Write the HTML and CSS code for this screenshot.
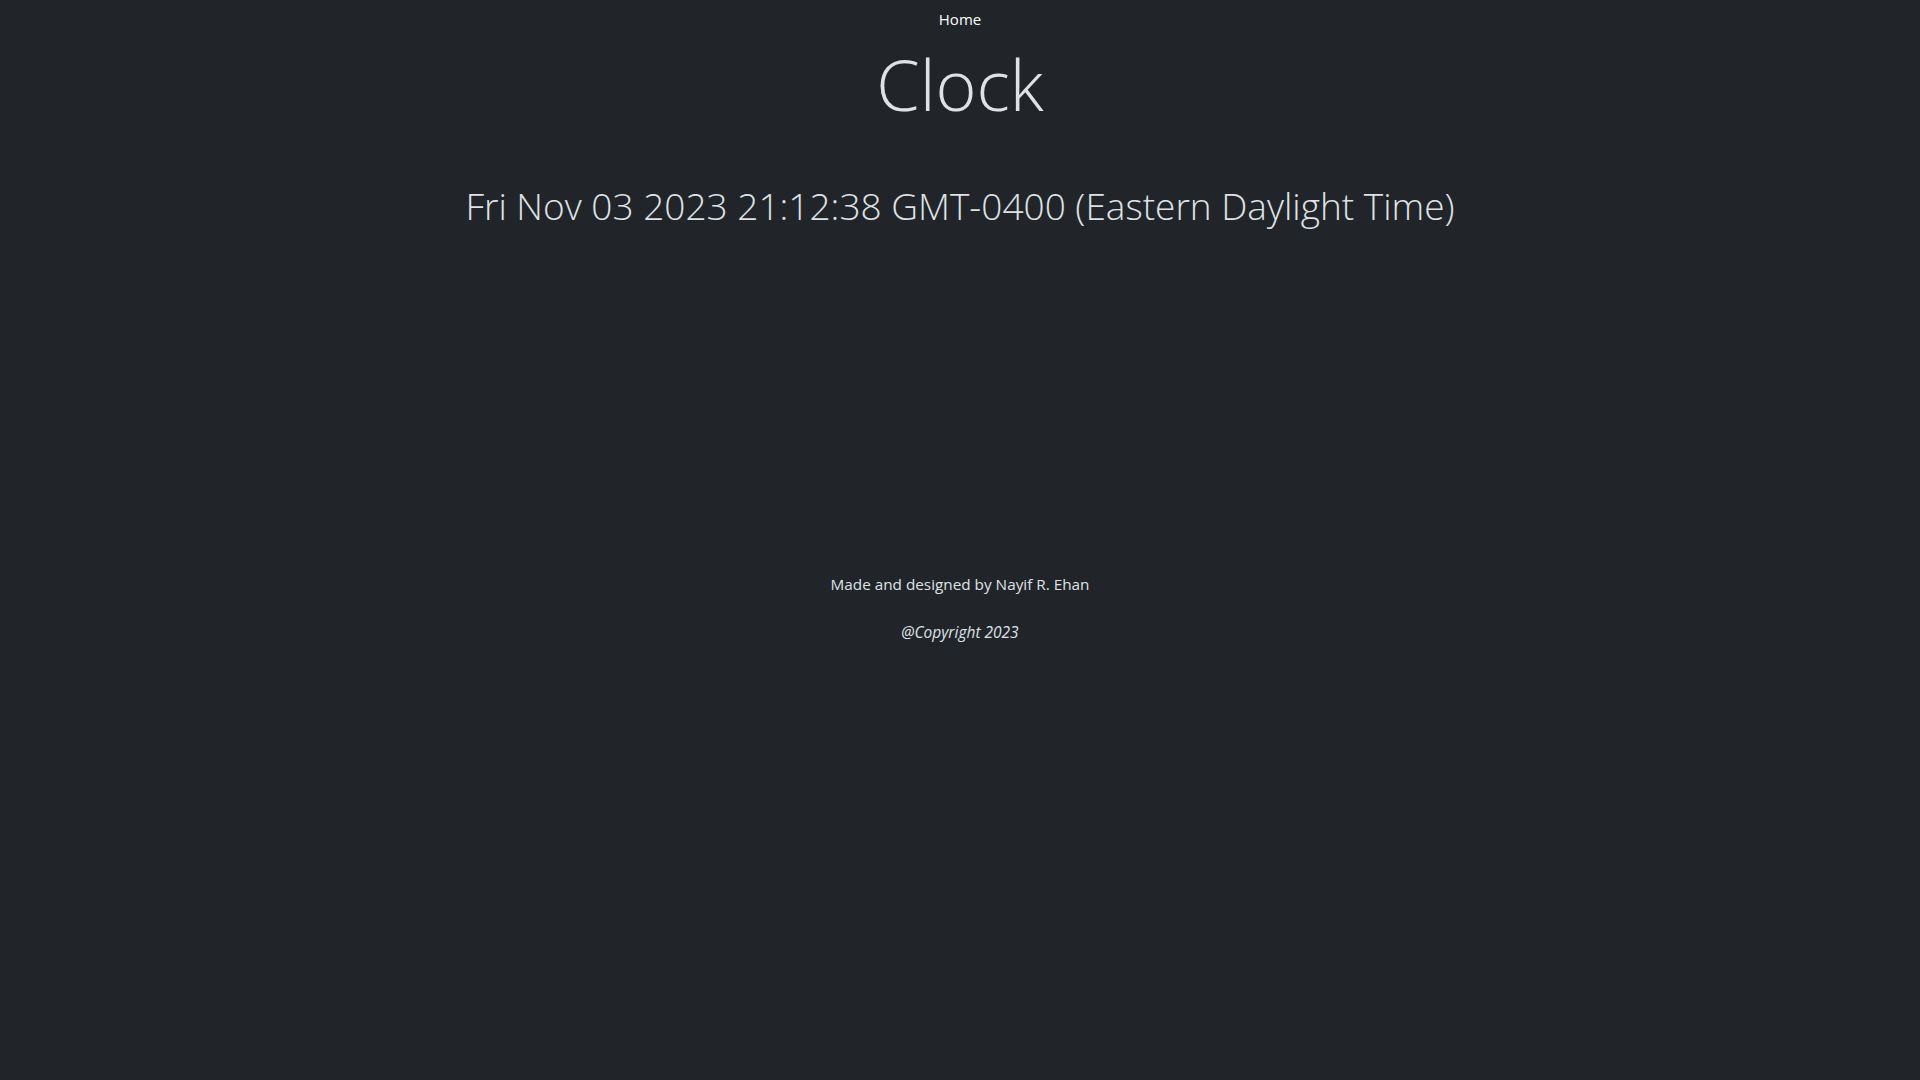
FILE: index.html
```html
<!DOCTYPE html>
<html lang="en">
<head>
<meta charset="utf-8">
<title>Clock</title>
<link rel="stylesheet" href="styles.css">
</head>
<body>
<nav class="nav">
  <a class="nav-link" href="#">Home</a>
</nav>
<main class="main">
  <h1 class="title">Clock</h1>
  <h2 class="time">Fri Nov 03 2023 21:12:38 GMT-0400 (Eastern Daylight Time)</h2>
</main>
<footer class="footer">
  <p class="credit">Made and designed by Nayif R. Ehan</p>
  <p class="copy">@Copyright 2023</p>
</footer>
</body>
</html>
```
FILE: styles.css
```css
html, body {
  margin: 0;
  padding: 0;
}
body {
  background: #212529;
  color: #dee2e6;
  font-family: "Open Sans", "Noto Sans", sans-serif;
  font-size: 16px;
  line-height: 24px;
  min-height: 1080px;
}
.nav {
  display: flex;
  justify-content: center;
  padding: 7px 0 8px;
}
.nav-link {
  color: #ffffff;
  text-decoration: none;
  font-size: 15px;
}
.main {
  display: flex;
  flex-direction: column;
  align-items: center;
}
.title {
  margin: 0;
  font-weight: 300;
  font-size: 70px;
  line-height: 90px;
}
.time {
  margin: 53px 0 0;
  font-weight: 300;
  font-size: 37px;
  line-height: 48px;
}
.footer {
  margin-top: 342px;
  display: flex;
  flex-direction: column;
  align-items: center;
}
.credit {
  margin: 0;
  font-size: 15.3px;
}
.copy {
  margin: 24px 0 0;
  font-size: 15.5px;
  font-style: italic;
}
```
